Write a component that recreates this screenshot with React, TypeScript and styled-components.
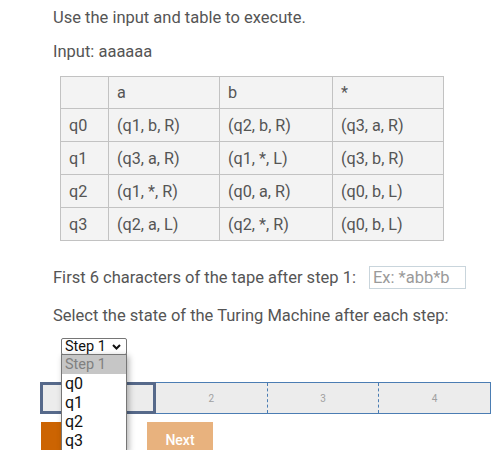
import React from "react";
import styled, { createGlobalStyle } from "styled-components";

const GlobalStyle = createGlobalStyle`
  html, body { margin: 0; padding: 0; background: #fff; }
  body { font-family: Roboto, "Noto Sans", Arial, sans-serif; }
`;

const Page = styled.div`
  width: 500px;
  height: 450px;
  overflow: hidden;
  position: relative;
  padding: 8px 0 0 40px;
  box-sizing: border-box;
`;

const Para = styled.p<{ $top?: number }>`
  margin: ${(p) => p.$top ?? 0}px 0 0 13px;
  color: #555;
  font-size: 16.5px;
  line-height: 20px;
  white-space: nowrap;
`;

const Table = styled.table`
  margin: 14px 0 0 20px;
  border-collapse: collapse;
  background: #f3f3f3;
  color: #555;
  font-size: 16.2px;
`;

const Cell = styled.td<{ $w: number; $h: number }>`
  width: ${(p) => p.$w}px;
  height: ${(p) => p.$h}px;
  box-sizing: border-box;
  border: 1px solid #c2c2c2;
  padding: 0 8px;
  text-align: left;
  vertical-align: middle;
  white-space: nowrap;
`;

const TapeRow = styled.div`
  display: flex;
  align-items: center;
  margin: 25px 0 0 13px;
  height: 23px;
  color: #555;
  font-size: 16.5px;
  white-space: nowrap;
`;

const TapeInput = styled.input`
  margin-left: 13px;
  width: 97px;
  height: 23px;
  box-sizing: border-box;
  border: 1px solid #c9d5dc;
  padding: 0 3px;
  font-family: Roboto, Arial, sans-serif;
  font-size: 16.5px;
  color: #555;
  outline: none;
  &::placeholder { color: #9a9a9a; }
`;

const SelectWrap = styled.div`
  position: relative;
  margin: 12px 0 0 21px;
  width: 66px;
  height: 17px;
  z-index: 5;
`;

const SelectBox = styled.div`
  width: 66px;
  height: 17px;
  box-sizing: border-box;
  border: 1px solid #767676;
  border-radius: 2px;
  background: #fff;
  display: flex;
  align-items: center;
  padding-left: 3px;
  font-size: 14.5px;
  line-height: 15px;
  color: #111;
  gap: 6px;
`;

const DropList = styled.ul`
  position: absolute;
  left: 0;
  top: 16px;
  width: 66px;
  margin: 0;
  padding: 0;
  list-style: none;
  box-sizing: border-box;
  border: 1px solid #767676;
  background: #fff;
  box-shadow: 2px 2px 6px rgba(0, 0, 0, 0.3);
`;

const DropItem = styled.li<{ $active?: boolean }>`
  height: 19px;
  line-height: 19px;
  padding-left: 3px;
  font-size: ${(p) => (p.$active ? 14.5 : 16)}px;
  color: ${(p) => (p.$active ? "#808080" : "#111")};
  background: ${(p) => (p.$active ? "#c6c6c6" : "#fff")};
`;

const Progress = styled.div`
  display: flex;
  margin-top: 27px;
  width: 451px;
  height: 32px;
  box-sizing: border-box;
  background: #ececec;
  border: 1px solid #4b7db3;
`;

const Segment = styled.div<{ $current?: boolean; $last?: boolean }>`
  flex: 1;
  display: flex;
  align-items: center;
  justify-content: center;
  font-size: 10px;
  color: #a0a0a0;
  box-sizing: border-box;
  border-right: ${(p) => (p.$last ? "none" : "1px dashed #4b7db3")};
  ${(p) =>
    p.$current
      ? `border: 3px solid #56698a; margin: -1px 0 -1px -1px; flex: 0 0 116px;`
      : ""}
`;

const Buttons = styled.div`
  display: flex;
  gap: 20px;
  margin: 8px 0 0 1px;
`;

const Button = styled.button<{ $primary?: boolean }>`
  width: ${(p) => (p.$primary ? 86 : 66)}px;
  height: 34px;
  border: none;
  background: ${(p) => (p.$primary ? "#cc6402" : "#e8b27e")};
  color: #fff;
  font-family: Roboto, Arial, sans-serif;
  font-size: 14px;
  font-weight: 500;
  padding: 10px 0 0;
  display: flex;
  justify-content: center;
  box-sizing: border-box;
`;

const Chevron = styled.svg`
  flex: none;
`;

const header = ["", "a", "b", "*"];
const rows = [
  ["q0", "(q1, b, R)", "(q2, b, R)", "(q3, a, R)"],
  ["q1", "(q3, a, R)", "(q1, *, L)", "(q3, b, R)"],
  ["q2", "(q1, *, R)", "(q0, a, R)", "(q0, b, L)"],
  ["q3", "(q2, a, L)", "(q2, *, R)", "(q0, b, L)"],
];
const widths = [48, 111, 113, 111];

export default function App() {
  return (
    <>
      <GlobalStyle />
      <Page>
        <Para>Use the input and table to execute.</Para>
        <Para $top={14}>Input: aaaaaa</Para>
        <Table>
          <tbody>
            <tr>
              {header.map((h, i) => (
                <Cell key={i} $w={widths[i]} $h={32}>{h}</Cell>
              ))}
            </tr>
            {rows.map((r, ri) => (
              <tr key={ri}>
                {r.map((c, ci) => (
                  <Cell key={ci} $w={widths[ci]} $h={33}>{c}</Cell>
                ))}
              </tr>
            ))}
          </tbody>
        </Table>
        <TapeRow>
          First 6 characters of the tape after step 1:
          <TapeInput placeholder="Ex: *abb*b" />
        </TapeRow>
        <Para $top={17}>Select the state of the Turing Machine after each step:</Para>
        <SelectWrap>
          <SelectBox>
            Step 1
            <Chevron width="9" height="6" viewBox="0 0 9 6">
              <path d="M1 1 L4.5 4.5 L8 1" fill="none" stroke="#111" strokeWidth="2" />
            </Chevron>
          </SelectBox>
          <DropList>
            <DropItem $active>Step 1</DropItem>
            <DropItem>q0</DropItem>
            <DropItem>q1</DropItem>
            <DropItem>q2</DropItem>
            <DropItem>q3</DropItem>
          </DropList>
        </SelectWrap>
        <Progress>
          <Segment $current>1</Segment>
          <Segment>2</Segment>
          <Segment>3</Segment>
          <Segment $last>4</Segment>
        </Progress>
        <Buttons>
          <Button $primary>Check</Button>
          <Button>Next</Button>
        </Buttons>
      </Page>
    </>
  );
}
